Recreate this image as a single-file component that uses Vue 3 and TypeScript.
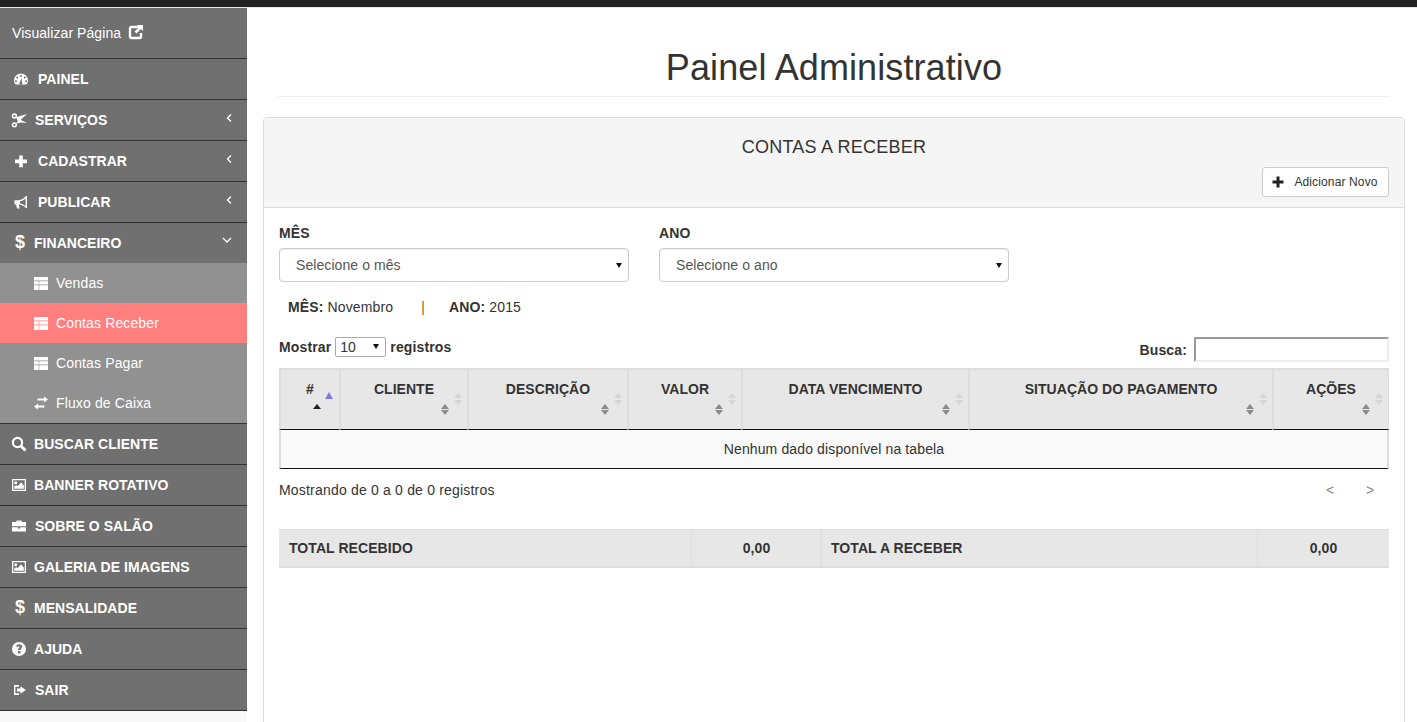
<script setup lang="ts">
interface NavItem { label: string; icon: string; gap: string; chevron?: string }
interface SubItem { label: string; icon: string; active?: boolean }

const topItems: NavItem[] = [
  { label: 'PAINEL', icon: 'dash', gap: 'g38' },
  { label: 'SERVIÇOS', icon: 'scissors', gap: 'g35', chevron: 'left' },
  { label: 'CADASTRAR', icon: 'plus', gap: 'g38', chevron: 'left' },
  { label: 'PUBLICAR', icon: 'horn', gap: 'g38', chevron: 'left' },
  { label: 'FINANCEIRO', icon: 'dollar', gap: 'g34', chevron: 'down' },
]
const subItems: SubItem[] = [
  { label: 'Vendas', icon: 'table' },
  { label: 'Contas Receber', icon: 'table', active: true },
  { label: 'Contas Pagar', icon: 'table' },
  { label: 'Fluxo de Caixa', icon: 'exchange' },
]
const bottomItems: NavItem[] = [
  { label: 'BUSCAR CLIENTE', icon: 'search', gap: 'g34' },
  { label: 'BANNER ROTATIVO', icon: 'picture', gap: 'g34' },
  { label: 'SOBRE O SALÃO', icon: 'case', gap: 'g35' },
  { label: 'GALERIA DE IMAGENS', icon: 'picture', gap: 'g34' },
  { label: 'MENSALIDADE', icon: 'dollar', gap: 'g34' },
  { label: 'AJUDA', icon: 'help', gap: 'g34' },
  { label: 'SAIR', icon: 'out', gap: 'g35' },
]
const fills: Record<string, string> = {
  dash: 'M4.6 13.5C3.6 12.4 3 11 3 9.5A7 7 0 0 1 17 9.5C17 11 16.4 12.4 15.4 13.5ZM10 3.9a1 1 0 1 0 0 2a1 1 0 1 0 0-2ZM6.2 5.6a1 1 0 1 0 0 2a1 1 0 1 0 0-2ZM13.8 5.6a1 1 0 1 0 0 2a1 1 0 1 0 0-2ZM5 9.2a1 1 0 1 0 0 2a1 1 0 1 0 0-2ZM15 9.2a1 1 0 1 0 0 2a1 1 0 1 0 0-2ZM10.6 7L9 11a1.5 1.5 0 1 0 2 .5Z',
  plus: 'M8.2 2.5H11.8V6.6H16V10.2H11.8V14.3H8.2V10.2H4V6.6H8.2Z',
  horn: 'M16 2V14L15 14C13 11.6 10 10.6 8 10.4L8.6 14.4H6L5 10.4H3.5V6.2H8C10 6 13 4.8 15 2ZM14.6 4.4C13 6 10.6 7 9 7.3V9.4C10.6 9.6 13 10.6 14.6 12Z',
  table: 'M1 2H15V15H1ZM1 5.6V6.3H15V5.6ZM1 9.6V10.3H15V9.6ZM5.7 6.3V9.6H6.3V6.3ZM5.7 10.3V15H6.3V10.3Z',
  exchange: 'M4.5 3.5H11V1.5L15 4.5L11 7.5V5.5H4.5ZM11.5 8.5V10.5H5V8.5L1 11.5L5 14.5V12.5H11.5Z',
  picture: 'M1 2H15V14H1ZM2.3 3.3V12.7H13.7V3.3ZM3.2 5.7a1.5 1.5 0 1 0 3 0a1.5 1.5 0 1 0-3 0ZM3.2 11.8V9.6L5.2 8L6.6 9.3L10 5.2L12.8 8.4V11.8Z',
  case: 'M5.5 4V2.6H10.5V4H15V8.2H1V4ZM6.8 3.8V4H9.2V3.8ZM1 9.2H6.8V10.6H9.2V9.2H15V13.5H1Z',
  help: 'M8 1a7 7 0 1 0 0 14a7 7 0 1 0 0-14ZM8 3.2C10 3.2 11.2 4.4 11.2 5.8C11.2 7.6 9.4 7.8 9.4 9H6.9C6.9 7 8.7 6.8 8.7 5.9C8.7 5.5 8.4 5.3 8 5.3C7.5 5.3 7.1 5.6 6.7 6.2L5 5C5.7 3.9 6.7 3.2 8 3.2ZM6.9 10H9.4V12.4H6.9Z',
  out: 'M3 3H8V4.7H4.4V11.3H8V13H3ZM9.5 4.3L14.8 8L9.5 11.7V9.5H6V6.5H9.5Z',
}

const columns = [
  { label: 'CLIENTE', cls: 'c2' },
  { label: 'DESCRIÇÃO', cls: 'c3' },
  { label: 'VALOR', cls: 'c4' },
  { label: 'DATA VENCIMENTO', cls: 'c5' },
  { label: 'SITUAÇÃO DO PAGAMENTO', cls: 'c6' },
  { label: 'AÇÕES', cls: 'c7' },
]
</script>

<template>
  <div class="page">
    <div class="topbar"></div>
    <div class="shell">
      <aside class="sidebar">
        <a class="view-page">
          <span>Visualizar Página</span>
          <svg class="ext" viewBox="0 0 16 16" aria-hidden="true">
            <path d="M11 3H3.5C2.7 3 2 3.7 2 4.5V12.5C2 13.3 2.7 14 3.5 14H11.5C12.3 14 13 13.3 13 12.5V9" fill="none" stroke="#fff" stroke-width="2.4" />
            <path d="M9 1H15V7L13 5L8.5 9.5L6.5 7.5L11 3Z" fill="#fff" />
          </svg>
        </a>

        <a v-for="item in topItems" :key="item.label" class="nav-row" :class="item.gap">
          <span class="nav-icon">
            <span v-if="item.icon === 'dollar'" class="dollar">$</span>
            <svg v-else-if="item.icon === 'scissors'" viewBox="0 0 18 16" aria-hidden="true">
              <circle cx="3.4" cy="4" r="1.9" fill="none" stroke="#fff" stroke-width="1.5" />
              <circle cx="3.4" cy="12.8" r="1.9" fill="none" stroke="#fff" stroke-width="1.5" />
              <path d="M5 5.2L16 2L9.5 8L7 9.4ZM5 11.5L7.4 8.4L9.5 7.8L16 11L10 10.6Z" fill="#fff" />
            </svg>
            <svg v-else viewBox="0 0 18 16" aria-hidden="true"><path :d="fills[item.icon]" fill="#fff" fill-rule="evenodd" /></svg>
          </span>
          <span class="nav-label">{{ item.label }}</span>
          <svg v-if="item.chevron === 'left'" class="chev" viewBox="0 0 8 8" aria-hidden="true"><path d="M6 0.5L2.5 4L6 7.5" fill="none" stroke="#fff" stroke-width="1.3" /></svg>
          <svg v-if="item.chevron === 'down'" class="chev chev-down" viewBox="0 0 10 8" aria-hidden="true"><path d="M1 2L5 6L9 2" fill="none" stroke="#fff" stroke-width="1.3" /></svg>
        </a>

        <div class="sub-list">
          <a v-for="sub in subItems" :key="sub.label" class="sub-row" :class="{ active: sub.active }">
            <svg viewBox="0 0 16 16" aria-hidden="true"><path :d="fills[sub.icon]" fill="#fff" fill-rule="evenodd" /></svg>
            <span>{{ sub.label }}</span>
          </a>
        </div>

        <a v-for="item in bottomItems" :key="item.label" class="nav-row" :class="item.gap">
          <span class="nav-icon">
            <span v-if="item.icon === 'dollar'" class="dollar">$</span>
            <svg v-else-if="item.icon === 'search'" viewBox="0 0 18 16" aria-hidden="true">
              <circle cx="6.5" cy="6.5" r="4.6" fill="none" stroke="#fff" stroke-width="2.2" />
              <path d="M10 10L14.5 14.5" stroke="#fff" stroke-width="3" />
            </svg>
            <svg v-else viewBox="0 0 16 16" class="icon16" aria-hidden="true"><path :d="fills[item.icon]" fill="#fff" fill-rule="evenodd" /></svg>
          </span>
          <span class="nav-label">{{ item.label }}</span>
        </a>
      </aside>

      <main class="main">
        <h1 class="page-title">Painel Administrativo</h1>

        <section class="panel">
          <header class="panel-head">
            <h2>CONTAS A RECEBER</h2>
            <button class="add-btn" type="button">
              <svg viewBox="0 0 12 12" aria-hidden="true"><path d="M4.5 0.5H7.5V4.5H11.5V7.5H7.5V11.5H4.5V7.5H0.5V4.5H4.5Z" fill="#222" /></svg>
              <span>Adicionar Novo</span>
            </button>
          </header>

          <div class="panel-body">
            <div class="filters">
              <label class="field">
                <span class="field-label">MÊS</span>
                <span class="select-wrap"><select class="form-select"><option>Selecione o mês</option></select></span>
              </label>
              <label class="field">
                <span class="field-label">ANO</span>
                <span class="select-wrap"><select class="form-select"><option>Selecione o ano</option></select></span>
              </label>
            </div>

            <p class="period">
              <b>MÊS:</b> Novembro
              <i class="sep">|</i>
              <b>ANO:</b> 2015
            </p>

            <div class="table-tools">
              <label class="length">Mostrar
                <span class="select-wrap len-wrap"><select class="len-select"><option>10</option></select></span>
                registros</label>
              <label class="search">Busca: <input type="text" /></label>
            </div>

            <table class="grid">
              <thead>
                <tr>
                  <th class="c1">
                    #
                    <i class="tri tri-black"></i>
                    <i class="tri tri-blue"></i>
                  </th>
                  <th v-for="col in columns" :key="col.label" :class="col.cls">
                    {{ col.label }}
                    <span class="sort sort-dark"><i></i><i></i></span>
                    <span class="sort sort-light"><i></i><i></i></span>
                  </th>
                </tr>
              </thead>
              <tbody>
                <tr><td colspan="7">Nenhum dado disponível na tabela</td></tr>
              </tbody>
            </table>

            <div class="table-foot">
              <span>Mostrando de 0 a 0 de 0 registros</span>
              <span class="pager"><a>&lt;</a><a>&gt;</a></span>
            </div>

            <table class="totals">
              <tbody>
                <tr>
                  <td class="t1">TOTAL RECEBIDO</td>
                  <td class="t2">0,00</td>
                  <td class="t3">TOTAL A RECEBER</td>
                  <td class="t4">0,00</td>
                </tr>
              </tbody>
            </table>
          </div>
        </section>
      </main>
    </div>
  </div>
</template>

<style scoped>
.page {
  height: 722px;
  overflow: hidden;
  font-family: "Liberation Sans", Arial, sans-serif;
  font-size: 14px;
  letter-spacing: .13px;
  color: #333;
  background: #fff;
  display: flex;
  flex-direction: column;
}
.topbar { height: 7px; background: #222; border-bottom: 1px solid #e7e7e7; flex: none; }
.shell { flex: 1; display: flex; min-height: 0; }

.sidebar { width: 247px; flex: none; background: #f8f8f8; }
.view-page {
  height: 50px;
  padding-left: 12px;
  display: flex;
  align-items: center;
  gap: 7px;
  background: #707070;
  color: #fff;
  letter-spacing: .07px;
  border-bottom: 1px solid #333;
}
.ext { width: 16px; height: 16px; margin-top: -3px; }
.nav-row {
  position: relative;
  height: 40px;
  display: flex;
  align-items: center;
  padding-left: 11px;
  background: #707070;
  color: #fff;
  font-weight: 700;
  letter-spacing: .03px;
  border-bottom: 1px solid #333;
}
.nav-row:nth-of-type(6) { border-bottom: 0; }
.nav-icon { display: flex; align-items: center; flex: none; height: 16px; }
.nav-icon svg { width: 18px; height: 16px; flex: none; margin-top: -1px; }
.nav-icon .icon16 { width: 16px; }
.g34 .nav-icon { width: 23px; }
.g35 .nav-icon { width: 24px; }
.g38 .nav-icon { width: 27px; }
.dollar { margin-left: 4px; font-size: 18px; line-height: 16px; margin-top: -3px; }
.chev { position: absolute; right: 14px; top: 14px; width: 8px; height: 8px; }
.chev-down { right: 15px; top: 13px; width: 10px; }

.sub-list { background: #919191; border-bottom: 1px solid #333; }
.sub-row {
  height: 40px;
  display: flex;
  align-items: center;
  gap: 7px;
  padding-left: 33px;
  color: #fff;
}
.sub-row svg { width: 16px; height: 16px; margin-top: -1px; }
.sub-row.active { background: #ff7f7f; }

.main { flex: 1; min-width: 0; padding: 0 12px 0 16px; }
.page-title {
  margin: 0 15px 20px 15px;
  padding: 39px 0 7px;
  text-align: center;
  font-size: 36px;
  line-height: 42px;
  font-weight: 400;
  letter-spacing: .1px;
  border-bottom: 1px solid #eee;
}
.panel {
  height: 700px;
  border: 1px solid #ddd;
  border-radius: 4px 4px 0 0;
  background: #fff;
}
.panel-head {
  position: relative;
  height: 89px;
  background: #f5f5f5;
  border-bottom: 1px solid #ddd;
  border-radius: 3px 3px 0 0;
}
.panel-head h2 {
  margin: 0;
  padding-top: 19px;
  text-align: center;
  font-size: 18px;
  line-height: 20px;
  font-weight: 400;
  letter-spacing: .25px;
}
.add-btn {
  position: absolute;
  right: 15px;
  top: 49px;
  width: 127px;
  height: 30px;
  display: flex;
  align-items: center;
  justify-content: center;
  gap: 10px;
  padding: 0 1px 0 0;
  background: #fff;
  border: 1px solid #ccc;
  border-radius: 3px;
  color: #333;
  font: 12px "Liberation Sans", Arial, sans-serif;
  letter-spacing: .13px;
}
.add-btn svg { width: 12px; height: 12px; }

.panel-body { padding: 0 15px; }
.filters { display: flex; gap: 30px; padding-top: 15px; }
.field { width: 350px; display: block; }
.field-label { display: block; font-weight: 700; line-height: 20px; margin-bottom: 5px; }
.select-wrap { position: relative; display: block; }
.select-wrap::after {
  content: "";
  position: absolute;
  right: 7px;
  top: 15px;
  width: 0;
  height: 0;
  border-left: 3.5px solid transparent;
  border-right: 3.5px solid transparent;
  border-top: 5px solid #111;
  pointer-events: none;
}
.form-select {
  display: block;
  width: 100%;
  height: 34px;
  padding: 6px 16px;
  appearance: none;
  font: 14px "Liberation Sans", Arial, sans-serif;
  letter-spacing: .08px;
  color: #555;
  background: #fff;
  border: 1px solid #ccc;
  border-radius: 4px;
  box-shadow: inset 0 1px 1px rgba(0, 0, 0, .075);
}
.period { margin: 15px 0 0 9px; line-height: 20px; }
.sep { font-style: normal; color: #a85a14; margin: 0 24px 0 24px; }

.table-tools {
  display: flex;
  justify-content: space-between;
  align-items: flex-start;
  margin-top: 20px;
  font-weight: 700;
  height: 31px;
}
.length { line-height: 20px; }
.len-wrap { display: inline-block; vertical-align: top; }
.len-wrap::after { right: 7px; top: 7px; }
.len-select {
  display: block;
  width: 51px;
  height: 20px;
  padding: 0 0 0 4px;
  appearance: none;
  font: 400 14px "Liberation Sans", Arial, sans-serif;
  color: #333;
  background: #fff;
  border: 1px solid #aaa;
  border-radius: 2px;
}
.search { display: flex; align-items: center; gap: 7px; height: 25px; }
.search input {
  width: 195px;
  height: 25px;
  box-sizing: border-box;
  border: 2px solid;
  border-color: #9a9a9a #eee #eee #9a9a9a;
  background: #fff;
  padding: 0;
}

.grid {
  width: 1110px;
  table-layout: fixed;
  border-collapse: separate;
  border-spacing: 0;
}
.grid th {
  position: relative;
  height: 62px;
  box-sizing: border-box;
  padding: 9px 18px 0;
  vertical-align: top;
  text-align: center;
  line-height: 20px;
  font-weight: 700;
  letter-spacing: .05px;
  background: #e7e7e7;
  border-top: 2px solid #ddd;
  border-left: 2px solid #ddd;
  border-bottom: 1px solid #111;
}
.grid th:last-child { border-right: 1px solid #ddd; }
.c1 { width: 60px; }
.c2 { width: 128px; }
.c3 { width: 160px; }
.c4 { width: 114px; }
.c5 { width: 227px; }
.c6 { width: 304px; }
.c7 { width: 117px; }
.grid td {
  height: 39px;
  box-sizing: border-box;
  text-align: center;
  background: #f9f9f9;
  border-left: 2px solid #ddd;
  border-right: 2px solid #ddd;
  border-bottom: 1px solid #111;
}
.tri { position: absolute; width: 0; height: 0; border-left: 5px solid transparent; border-right: 5px solid transparent; }
.tri-black { left: 32px; top: 34px; border-left-width: 4.5px; border-right-width: 4.5px; border-bottom: 5px solid #222; }
.tri-blue { left: 44px; top: 22px; border-left-width: 4.5px; border-right-width: 4.5px; border-bottom: 7px solid #7c7ce0; }
.sort { position: absolute; width: 9px; }
.sort i { display: block; width: 0; height: 0; border-left: 4.5px solid transparent; border-right: 4.5px solid transparent; }
.sort i:first-child { border-bottom: 5px solid currentColor; margin-bottom: 1px; }
.sort i:last-child { border-top: 5px solid currentColor; }
.sort-dark { right: 17px; top: 34px; color: #8a8a8a; }
.sort-light { right: 4px; top: 23px; color: #d6d6d6; }
.sort-light i:first-child { margin-bottom: 2px; }

.table-foot {
  display: flex;
  justify-content: space-between;
  margin-top: 11px;
  line-height: 20px;
  letter-spacing: .19px;
}
.pager { display: flex; gap: 32px; padding-right: 15px; color: #888; }
.pager a { width: 8px; text-align: center; }
.totals {
  width: 1110px;
  margin-top: 29px;
  table-layout: fixed;
  border-collapse: separate;
  border-spacing: 0;
  background: #e7e7e7;
  font-weight: 700;
  letter-spacing: .07px;
}
.totals td {
  height: 39px;
  box-sizing: border-box;
  border-top: 1px solid #ddd;
  border-bottom: 2px solid #ddd;
  padding: 0 9px;
}
.totals td + td { border-left: 1px solid #ddd; }
.totals .t1 { width: 412px; padding-left: 10px; }
.t2 { width: 130px; text-align: center; }
.t3 { width: 436px; }
.t4 { text-align: center; }
</style>

<style>
html, body { margin: 0; overflow: hidden; }
</style>
